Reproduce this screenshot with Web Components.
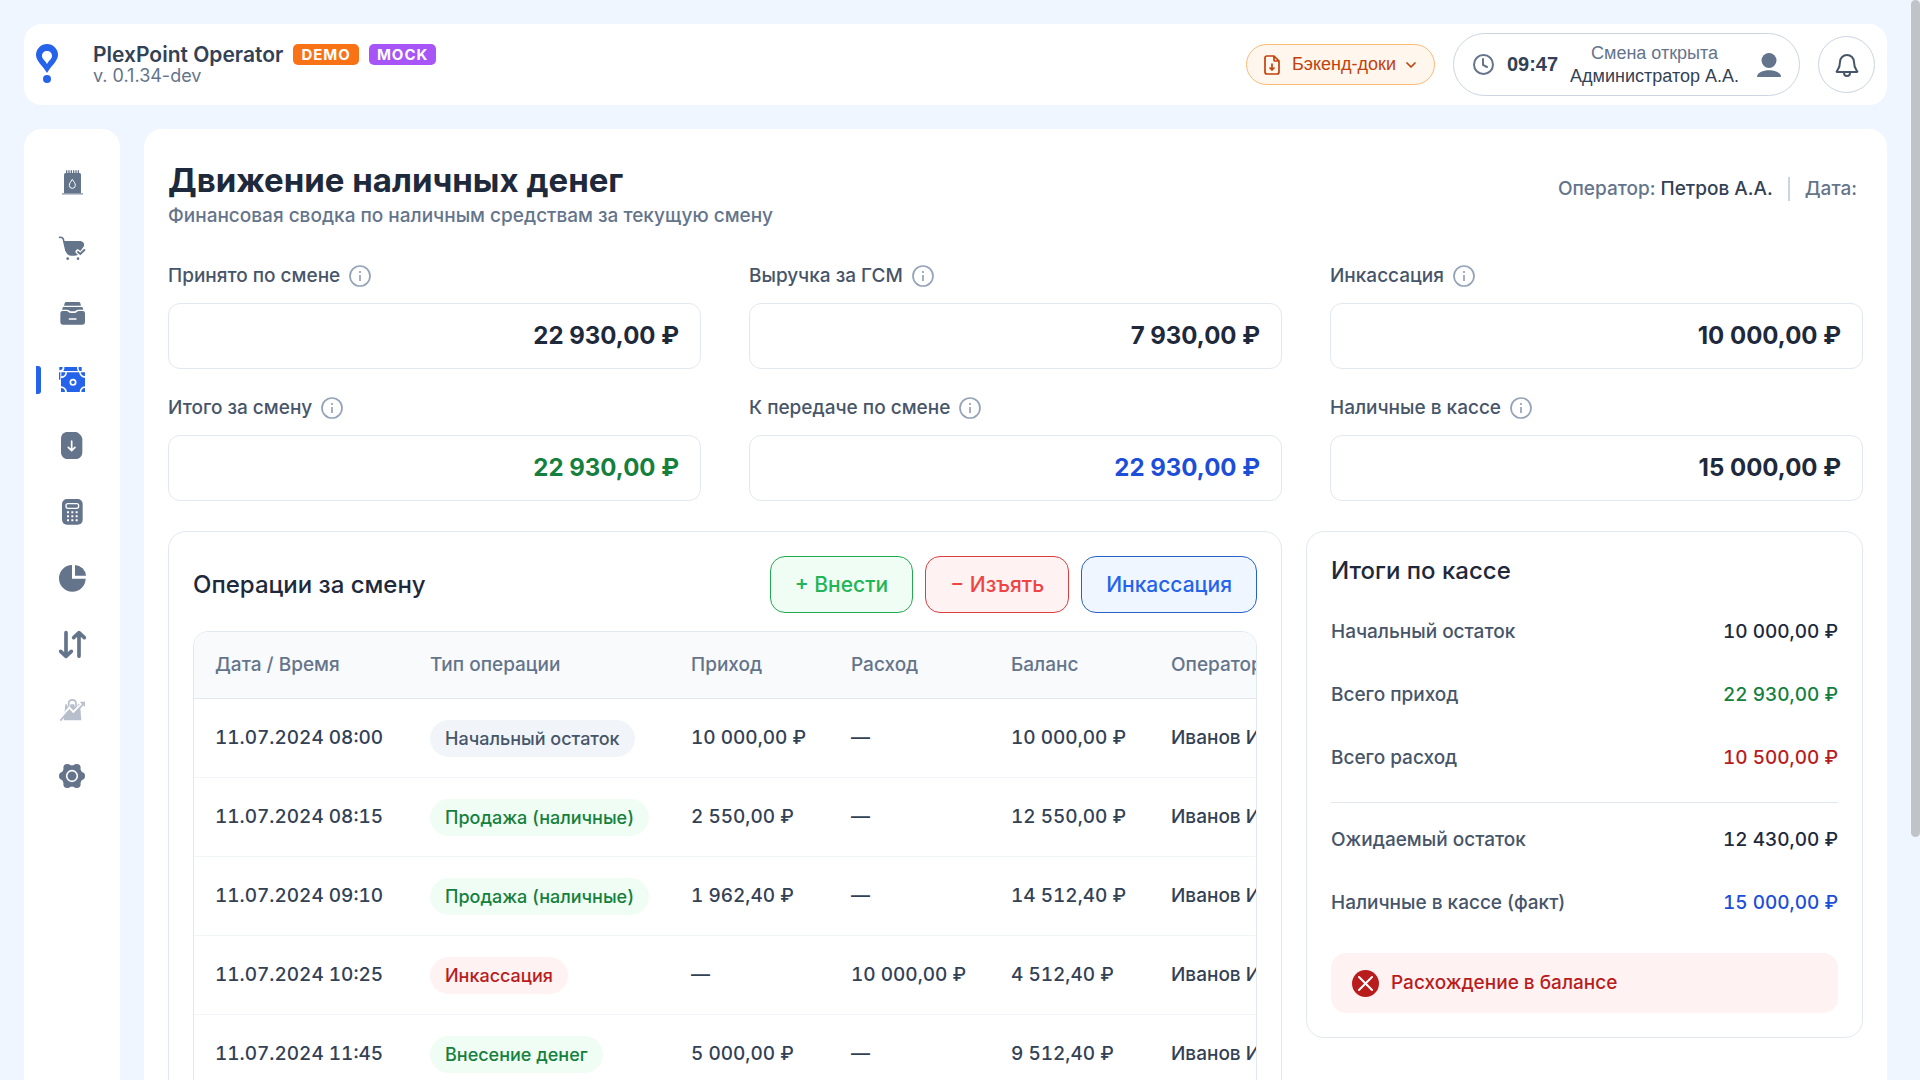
<!DOCTYPE html>
<html lang="ru">
<head>
<meta charset="utf-8">
<meta name="viewport" content="width=device-width, initial-scale=1">
<title>PlexPoint Operator</title>
<style>
  html { scrollbar-width: none; background: #eff6ff; }
  body {
    margin: 0;
    font-family: Inter, "Liberation Sans", sans-serif;
    font-size: 19px;
    font-weight: 500;
    line-height: 24px;
    color: #1e293b;
  }
</style>
</head>
<body>
<plex-app></plex-app>

<script>
const NAV_ICONS = {
  fuel: `<path d="M9 72H72V77H9z" opacity=".6"/><path d="M15 17q0-5 5-5h42q4 0 4 5v56H15z"/>
    <path d="M21 4h4v9h-4zM28 4h4v9h-4zM35 4h4v9h-4zM42 4h4v9h-4zM49 4h4v9h-4zM56 4h4v9h-4z"/>
    <path d="M40 31c5 8 9 12 9 18a9 9 0 0 1-18 0c0-6 4-10 9-18z" fill="none" stroke="#fff" stroke-width="3"/>`,
  cart: `<path d="M2 7c7-1 11 2 12 10l7 30" fill="none" stroke="currentColor" stroke-width="5" stroke-linecap="round"/>
    <path d="M14 18h48c10 0 15 7 13 15-2 4-7 9-9 14-4 8-9 15-19 15h-11c-9 0-14-7-16-15z"/>
    <circle cx="26" cy="71" r="4"/><circle cx="57" cy="71" r="4"/>
    <path d="M56 50l8 7 13-13" fill="none" stroke="#fff" stroke-width="13" stroke-linecap="round"/>
    <path d="M57 51l7 6 12-12" fill="none" stroke="currentColor" stroke-width="6" stroke-linecap="round"/>`,
  drawer: `<path d="M15 14l2-7q1-4 5-4h37q4 0 5 4l2 7z"/><path d="M9 26l3-8h58l3 8H58c-6 0-8 4-11 5H35c-3-1-5-5-11-5z"/>
    <path d="M4 37q0-7 7-7h12c4 0 6 6 13 6h10c7 0 9-6 13-6h12q7 0 7 7v27q0 7-7 7H11q-7 0-7-7z"/>
    <path d="M31 54h20" stroke="#fff" stroke-width="4" stroke-linecap="round"/>`,
  cash: `<path d="M16 0H54A15 15 0 0 0 57 12H13A15 15 0 0 0 16 0zM1 0h10A10 10 0 0 1 1 10zM59 0h9v12h-6A12 12 0 0 1 59 0zM0 16h4v22H0z"/>
    <path d="M24 16H60A18 18 0 0 0 78 32V58A18 18 0 0 0 62 75H24A18 18 0 0 0 6 58V34A18 18 0 0 0 24 16z"/>
    <path d="M7 16h12A12 12 0 0 1 7 28zM65 16h13V27A13 13 0 0 1 65 16zM6 63a12 12 0 0 1 12 12H6zM78 63v12H67A12 12 0 0 1 78 63z"/>
    <circle cx="42" cy="46" r="8" fill="none" stroke="#fff" stroke-width="5"/>`,
  incoming: `<path d="M26-3h25c6 0 19 12 19 22v38c0 13-8 21-20 21H26C14 78 6 70 6 57V17C6 5 14-3 26-3z"/>
    <path d="M38 24v28M28 43l10 10 10-10" fill="none" stroke="#fff" stroke-width="5" stroke-linecap="round" stroke-linejoin="round"/>`,
  calculator: `<rect x="9" width="62" height="77" rx="15"/><rect x="21" y="14" width="38" height="14" rx="6" fill="none" stroke="#fff" stroke-width="4"/>
    <path d="M24 37h6v6h-6zM37 37h6v6h-6zM50 37h6v6h-6zM24 49h6v6h-6zM37 49h6v6h-6zM50 49h6v6h-6zM24 61h6v6h-6zM37 61h6v6h-6zM50 61h6v6h-6z" fill="#fff"/>`,
  chart: `<path d="M39 0V41H80A40 40 0 1 1 39 0z"/><path d="M48 0A35 35 0 0 1 81 32H48z"/>`,
  exchange: `<path d="M21 5V74M5 61l16 15 16-15M60 76V7M44 20L60 5l16 15" fill="none" stroke="currentColor" stroke-width="11" stroke-linecap="round" stroke-linejoin="round"/>`,
  sales: `<path d="M19 22h44l4 48H14z"/><path d="M29 28v-8c0-15 22-15 22 0v8" fill="none" stroke="#fff" stroke-width="10"/>
    <path d="M29 28v-8c0-15 22-15 22 0v8" fill="none" stroke="currentColor" stroke-width="5"/>
    <path d="M3 64l28-31 12 12 28-27" fill="none" stroke="#fff" stroke-width="7"/>
    <path d="M4 71l27-31 12 13 29-31" fill="none" stroke="currentColor" stroke-width="5"/><path d="M62 14h16v16z"/>`,
  settings: `<circle cx="39" cy="39" r="32"/><circle cx="12" cy="39" r="12"/><circle cx="66" cy="39" r="12"/>
    <circle cx="25" cy="15" r="12"/><circle cx="53" cy="15" r="12"/><circle cx="25" cy="63" r="12"/><circle cx="53" cy="63" r="12"/>
    <circle cx="39" cy="39" r="16" fill="none" stroke="#fff" stroke-width="5"/>`,
};

const NAV_ITEMS = [
  ["fuel", "Топливо"], ["cart", "Продажи"], ["drawer", "Касса"], ["cash", "Движение наличных"],
  ["incoming", "Приём"], ["calculator", "Калькулятор"], ["chart", "Отчёты"],
  ["exchange", "Обмен"], ["sales", "Аналитика"], ["settings", "Настройки"],
];

const OPERATIONS = [
  ["11.07.2024 08:00", "neutral", "Начальный остаток", "10 000,00 ₽", "—", "10 000,00 ₽"],
  ["11.07.2024 08:15", "green", "Продажа (наличные)", "2 550,00 ₽", "—", "12 550,00 ₽"],
  ["11.07.2024 09:10", "green", "Продажа (наличные)", "1 962,40 ₽", "—", "14 512,40 ₽"],
  ["11.07.2024 10:25", "red", "Инкассация", "—", "10 000,00 ₽", "4 512,40 ₽"],
  ["11.07.2024 11:45", "green", "Внесение денег", "5 000,00 ₽", "—", "9 512,40 ₽"],
];

class BaseElement extends HTMLElement {
  constructor() {
    super();
    this.attachShadow({ mode: "open" });
  }

  connectedCallback() {
    this.shadowRoot.innerHTML = this.render();
  }
}

class AppTag extends BaseElement {
  render() {
    return `
      <style>
        :host {
          display: inline-flex;
          align-items: center;
          height: 21px;
          padding: 0 8px;
          border-radius: 5px;
          background: #f97316;
          color: #fff;
          font-size: 15px;
          font-weight: 700;
          letter-spacing: 1px;
        }
        :host([tone="purple"]) { background: #a855f7; }
      </style>
      <slot></slot>`;
  }
}

class AppHeader extends BaseElement {
  render() {
    return `
      <style>
        :host {
          display: flex;
          align-items: center;
          gap: 18px;
          padding: 9px 12px;
          border-radius: 18px;
          background: #fff;
        }
        .logo { display: block; margin: 0 17px 2px 0; color: #2563eb; }
        .brand { flex: 1; }
        .name { display: flex; align-items: center; gap: 10px; line-height: 22px; }
        h1 { margin: 0; font-size: 21px; font-weight: 600; color: #334155; }
        .version { margin: 0; font-size: 18px; font-weight: 400; line-height: 20px; color: #64748b; }
        button {
          display: flex;
          align-items: center;
          box-sizing: border-box;
          margin: 0;
          border: 1px solid #cbd5e1;
          border-radius: 32px;
          background: #fff;
          color: #334155;
          font: 18px/23px "Liberation Sans", Arial, sans-serif;
          cursor: pointer;
        }
        .docs {
          height: 41px;
          padding: 0 18px 0 15px;
          gap: 10px;
          border-color: #fdba74;
          background: #fff7ed;
          color: #c2410c;
        }
        .shift { height: 63px; padding: 0 18px; gap: 12px; color: #64748b; }
        .shift b { color: #334155; font-size: 20px; }
        .user { display: block; text-align: center; margin-right: 6px; }
        .user span { display: block; }
        .user .who { color: #334155; }
        .bell { width: 57px; height: 57px; padding: 0; justify-content: center; color: #475569; }
      </style>
      <svg class="logo" width="22" height="40" viewBox="0 0 22 40" fill="currentColor">
        <path fill-rule="evenodd" d="M11 0a11 11 0 0 1 11 11c0 6-7 11-11 18C7 22 0 17 0 11A11 11 0 0 1 11 0zm0 7c-3 0-5 2-5 5s3 4 5 8c2-4 5-5 5-8s-2-5-5-5z"/>
        <circle cx="11" cy="35" r="4"/>
      </svg>
      <div class="brand">
        <div class="name">
          <h1>PlexPoint Operator</h1>
          <app-tag>DEMO</app-tag>
          <app-tag tone="purple">MOCK</app-tag>
        </div>
        <p class="version">v. 0.1.34-dev</p>
      </div>
      <button class="docs" type="button">
        <svg width="20" height="20" viewBox="0 0 20 20" fill="none" stroke="currentColor" stroke-width="1.700" stroke-linejoin="round" stroke-linecap="round">
          <path d="M12 1H5a2 2 0 0 0-2 2v14a2 2 0 0 0 2 2h10a2 2 0 0 0 2-2V6zv4q0 1 1 1h4M10 9v6M8 13l2 2 2-2"/>
        </svg>
        Бэкенд-доки
        <svg width="10" height="10" viewBox="0 0 10 10" fill="none" stroke="currentColor" stroke-width="1.700" stroke-linecap="round" stroke-linejoin="round"><path d="M1 3l4 4 4-4"/></svg>
      </button>
      <button class="shift" type="button">
        <svg width="23" height="23" viewBox="0 0 23 23" fill="none" stroke="currentColor" stroke-width="2" stroke-linecap="round"><circle cx="11.500" cy="11.500" r="9.500"/><path d="M11 6v6l4 2"/></svg>
        <b>09:47</b>
        <span class="user"><span>Смена открыта</span><span class="who">Администратор А.А.</span></span>
        <svg width="24" height="24" viewBox="0 0 24 24" fill="currentColor"><circle cx="12" cy="7.500" r="7.500"/><path d="M0 24c0-9 24-9 24 0z"/></svg>
      </button>
      <button class="bell" type="button" aria-label="Уведомления">
        <svg width="24" height="26" viewBox="0 0 24 26" fill="none" stroke="currentColor" stroke-width="2" stroke-linejoin="round">
          <path d="M2 19c2-3 3-4 3-9a7 7 0 0 1 14 0c0 5 1 6 3 9 1 1 0 1-1 1H3c-1 0-2 0-1-1zM9 21a3 3 0 0 0 6 0"/>
        </svg>
      </button>`;
  }
}

class SideNav extends BaseElement {
  render() {
    const links = NAV_ITEMS.map(([icon, label]) => `
      <a href="#${icon}" aria-label="${label}" class="${icon === "cash" ? "active" : ""} ${icon === "sales" ? "muted" : ""}">
        <svg width="26" height="26" viewBox="0 0 78 78" fill="currentColor">${NAV_ICONS[icon]}</svg>
      </a>`).join("");
    return `
      <style>
        :host { display: block; padding: 31px 12px; border-radius: 18px; background: #fff; }
        nav { display: grid; gap: 22px; }
        a {
          position: relative;
          display: flex;
          align-items: center;
          justify-content: center;
          height: 44px;
          color: #64748b;
        }
        a.active { color: #2563eb; }
        a.active::before {
          content: "";
          position: absolute;
          left: 0;
          width: 5px;
          height: 28px;
          border-radius: 0 3px 3px 0;
          background: #2563eb;
        }
        a.muted { color: #b8bfcc; }
        svg { overflow: visible; }
      </style>
      <nav>${links}</nav>`;
  }
}

class MetricField extends BaseElement {
  render() {
    return `
      <style>
        :host { display: block; color: #1e293b; }
        :host([tone="green"]) { color: #15803d; }
        :host([tone="blue"]) { color: #1d4ed8; }
        .caption { display: flex; align-items: center; gap: 9px; height: 28px; margin-bottom: 13px; color: #475569; }
        svg { color: #94a3b8; }
        output {
          display: flex;
          align-items: center;
          justify-content: flex-end;
          box-sizing: border-box;
          height: 66px;
          padding: 0 21px;
          border: 1px solid #e2e8f0;
          border-radius: 12px;
          font-size: 24px;
          font-weight: 700;
        }
      </style>
      <div class="caption">
        <label for="value">${this.getAttribute("label")}</label>
        <svg width="22" height="22" viewBox="0 0 22 22" fill="none" stroke="currentColor" stroke-width="1.700"><circle cx="11" cy="11" r="10"/><path d="M11 10v6M11 6v2"/></svg>
      </div>
      <output id="value"><slot></slot></output>`;
  }
}

class OpBadge extends BaseElement {
  render() {
    return `
      <style>
        :host {
          display: inline-block;
          vertical-align: middle;
          padding: 0 15px;
          border-radius: 19px;
          background: #f1f5f9;
          color: #475569;
          font-size: 18px;
          line-height: 37px;
        }
        :host([tone="green"]) { background: #f0fdf4; color: #15803d; }
        :host([tone="red"]) { background: #fef2f2; color: #b91c1c; }
      </style>
      <slot></slot>`;
  }
}

class CashOperations extends BaseElement {
  render() {
    const rows = OPERATIONS.map(([date, tone, type, income, expense, balance]) => `
      <tr>
        <td>${date}</td>
        <td><op-badge tone="${tone}">${type}</op-badge></td>
        <td>${income}</td><td>${expense}</td><td>${balance}</td><td>Иванов И.И.</td>
      </tr>`).join("");
    return `
      <style>
        :host {
          display: block;
          min-width: 0;
          padding: 24px;
          border: 1px solid #e2e8f0;
          border-radius: 18px;
        }
        header { display: flex; align-items: center; gap: 12px; margin-bottom: 18px; }
        h3 { flex: 1; margin: 0; font-size: 24px; font-weight: 500; }
        button {
          height: 57px;
          padding: 0 24px;
          border: 1px solid;
          border-radius: 15px;
          font: 500 21px/24px Inter, "Liberation Sans", sans-serif;
          cursor: pointer;
        }
        .deposit { border-color: #22a84f; background: #f0fdf4; color: #22b455; }
        .withdraw { border-color: #dc3d3d; background: #fef2f2; color: #ef4444; }
        .collect { border-color: #2563cb; background: #eff6ff; color: #2563eb; }
        .scroll { overflow: hidden; border: 1px solid #e2e8f0; border-radius: 15px; }
        table { width: 1140px; table-layout: fixed; border-collapse: separate; border-spacing: 0; color: #334155; font-variant-numeric: tabular-nums; }
        th, td { box-sizing: border-box; padding: 0 0 0 21px; text-align: left; white-space: nowrap; }
        th { height: 67px; border-bottom: 1px solid #e2e8f0; background: #f8fafc; color: #64748b; font-weight: 500; }
        td { height: 79px; border-bottom: 1px solid #f1f5f9; }
        .date { width: 215px; }
        .type { width: 261px; }
        .sum { width: 160px; }
      </style>
      <header>
        <h3>Операции за смену</h3>
        <button class="deposit" type="button">+ Внести</button>
        <button class="withdraw" type="button">− Изъять</button>
        <button class="collect" type="button">Инкассация</button>
      </header>
      <div class="scroll">
        <table>
          <thead>
            <tr>
              <th class="date">Дата / Время</th><th class="type">Тип операции</th>
              <th class="sum">Приход</th><th class="sum">Расход</th><th class="sum">Баланс</th><th>Оператор</th>
            </tr>
          </thead>
          <tbody>${rows}</tbody>
        </table>
      </div>`;
  }
}

class SummaryRow extends BaseElement {
  render() {
    return `
      <style>
        :host { display: flex; justify-content: space-between; align-items: center; height: 63px; color: #1e293b; }
        :host([tone="green"]) { color: #15803d; }
        :host([tone="red"]) { color: #b91c1c; }
        :host([tone="blue"]) { color: #1d4ed8; }
        .label { color: #475569; }
        .value { font-variant-numeric: tabular-nums; }
      </style>
      <span class="label">${this.getAttribute("label")}</span>
      <span class="value"><slot></slot></span>`;
  }
}

class CashSummary extends BaseElement {
  render() {
    return `
      <style>
        :host { display: block; padding: 24px; border: 1px solid #e2e8f0; border-radius: 18px; }
        h3 { margin: 0 0 14px; font-size: 24px; line-height: 30px; font-weight: 500; }
        hr { height: 1px; margin: 13px 0 5px; border: 0; background: #e2e8f0; }
        .alert {
          display: flex;
          align-items: center;
          gap: 12px;
          height: 60px;
          margin-top: 19px;
          padding: 0 21px;
          border-radius: 15px;
          background: #fef2f2;
          color: #b91c1c;
        }
      </style>
      <h3>Итоги по кассе</h3>
      <summary-row label="Начальный остаток">10 000,00 ₽</summary-row>
      <summary-row label="Всего приход" tone="green">22 930,00 ₽</summary-row>
      <summary-row label="Всего расход" tone="red">10 500,00 ₽</summary-row>
      <hr>
      <summary-row label="Ожидаемый остаток">12 430,00 ₽</summary-row>
      <summary-row label="Наличные в кассе (факт)" tone="blue">15 000,00 ₽</summary-row>
      <div class="alert" role="alert">
        <svg width="27" height="27" viewBox="0 0 27 27"><circle cx="13.500" cy="13.500" r="13.500" fill="#b91c1c"/><path d="M7 7l13 13M20 7L7 20" stroke="#fff" stroke-width="2" stroke-linecap="round"/></svg>
        <span>Расхождение в балансе</span>
      </div>`;
  }
}

class CashPage extends BaseElement {
  render() {
    return `
      <style>
        :host { display: block; min-width: 0; box-sizing: border-box; padding: 30px 24px 24px; border-radius: 18px; background: #fff; }
        .top { display: flex; align-items: center; justify-content: space-between; margin-bottom: 34px; }
        h2 { margin: 0; font-size: 33px; line-height: 42px; font-weight: 700; }
        .subtitle { margin: 3px 0 0; color: #64748b; }
        .meta { display: flex; align-items: center; gap: 15px; padding-right: 6px; margin-bottom: 9px; color: #64748b; }
        .meta b { color: #334155; font-weight: 500; }
        .meta .date { padding-left: 15px; border-left: 2px solid #cbd5e1; }
        .metrics { display: grid; grid-template-columns: repeat(3, 1fr); gap: 25px 48px; margin-bottom: 30px; }
        .panels { display: grid; grid-template-columns: minmax(0, 2fr) minmax(0, 1fr); gap: 24px; align-items: start; }
      </style>
      <div class="top">
        <div>
          <h2>Движение наличных денег</h2>
          <p class="subtitle">Финансовая сводка по наличным средствам за текущую смену</p>
        </div>
        <div class="meta"><span>Оператор: <b>Петров А.А.</b></span><span class="date">Дата:</span></div>
      </div>
      <section class="metrics">
        <metric-field label="Принято по смене">22 930,00 ₽</metric-field>
        <metric-field label="Выручка за ГСМ">7 930,00 ₽</metric-field>
        <metric-field label="Инкассация">10 000,00 ₽</metric-field>
        <metric-field label="Итого за смену" tone="green">22 930,00 ₽</metric-field>
        <metric-field label="К передаче по смене" tone="blue">22 930,00 ₽</metric-field>
        <metric-field label="Наличные в кассе">15 000,00 ₽</metric-field>
      </section>
      <section class="panels">
        <cash-operations></cash-operations>
        <cash-summary></cash-summary>
      </section>`;
  }
}

class PlexApp extends BaseElement {
  render() {
    return `
      <style>
        :host { display: block; padding: 24px 33px 24px 24px; }
        .body { display: grid; grid-template-columns: 96px minmax(0, 1fr); gap: 24px; margin-top: 24px; }
        .thumb {
          position: fixed;
          top: 0;
          right: 0;
          width: 9px;
          height: 77.5vh;
          border-radius: 5px;
          background: #c0c4c8;
        }
      </style>
      <app-header></app-header>
      <div class="body">
        <side-nav></side-nav>
        <cash-page></cash-page>
      </div>
      <div class="thumb"></div>`;
  }
}

customElements.define("app-tag", AppTag);
customElements.define("app-header", AppHeader);
customElements.define("side-nav", SideNav);
customElements.define("metric-field", MetricField);
customElements.define("op-badge", OpBadge);
customElements.define("cash-operations", CashOperations);
customElements.define("summary-row", SummaryRow);
customElements.define("cash-summary", CashSummary);
customElements.define("cash-page", CashPage);
customElements.define("plex-app", PlexApp);
</script>
</body>
</html>
